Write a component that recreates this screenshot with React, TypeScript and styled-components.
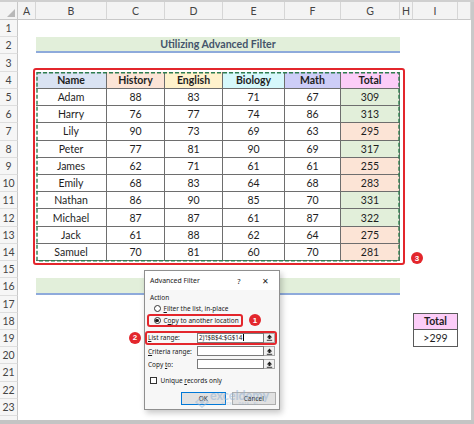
import React from 'react';
import styled, { createGlobalStyle } from 'styled-components';

const GlobalStyle = createGlobalStyle`
  html, body {
    margin: 0;
    padding: 0;
    background: #ffffff;
  }
  body {
    font-family: Lato, "Liberation Sans", sans-serif;
  }
  * {
    box-sizing: border-box;
  }
`;

const colLetters = ['A', 'B', 'C', 'D', 'E', 'F', 'G', 'H', 'I', ''];

const headers = [
  { label: 'Name', bg: '#dae3f3' },
  { label: 'History', bg: '#fce4d6' },
  { label: 'English', bg: '#fff2cc' },
  { label: 'Biology', bg: '#d6f8fb' },
  { label: 'Math', bg: '#cdcdf7' },
  { label: 'Total', bg: '#fccdf8' },
];

const students: [string, number, number, number, number, number][] = [
  ['Adam', 88, 83, 71, 67, 309],
  ['Harry', 76, 77, 74, 86, 313],
  ['Lily', 90, 73, 69, 63, 295],
  ['Peter', 77, 81, 90, 69, 317],
  ['James', 62, 71, 61, 61, 255],
  ['Emily', 68, 83, 64, 68, 283],
  ['Nathan', 86, 90, 85, 70, 331],
  ['Michael', 87, 87, 61, 87, 322],
  ['Jack', 61, 88, 62, 64, 275],
  ['Samuel', 70, 81, 60, 70, 281],
];

// grid column index of sheet column B
const B = 3;

const UploadIcon = () => (
  <svg width="7" height="7" viewBox="0 0 7 7">
    <path d="M3.5 0.6 L6.2 3.6 H4.5 V5 H2.5 V3.6 H0.8 Z" fill="#1f1f1f" />
    <rect x="0.8" y="5.8" width="5.4" height="0.9" fill="#1f1f1f" />
  </svg>
);

const App = () => {
  return (
    <>
      <GlobalStyle />
      <Frame>
        <TopStrip />
        <SheetArea>
          <Sheet>
            <Corner>
              <svg width="8" height="8" viewBox="0 0 8 8">
                <polygon points="8,0 8,8 0,8" fill="#b8b8b8" />
              </svg>
            </Corner>
            {colLetters.map((c, i) => (
              <ColHead key={i} $col={i + 2}>
                {c}
              </ColHead>
            ))}
            {Array.from({ length: 24 }, (_, i) => (
              <RowHead key={i} $row={i + 2}>
                {i < 23 ? i + 1 : ''}
              </RowHead>
            ))}

            <TitleBand $row={3}>Utilizing Advanced Filter</TitleBand>

            {headers.map((h, i) => (
              <Cell key={h.label} $col={B + i} $row={5} $bg={h.bg} $bold>
                {h.label}
              </Cell>
            ))}
            {students.map((s, r) =>
              s.map((v, c) => (
                <Cell
                  key={`${r}-${c}`}
                  $col={B + c}
                  $row={6 + r}
                  $bg={c === 5 ? (Number(v) > 299 ? '#e2efda' : '#fce4d6') : '#ffffff'}
                >
                  {v}
                </Cell>
              ))
            )}
            <CopyMarquee>
              <svg width="364" height="190" viewBox="0 0 364 190">
                <rect
                  x="1"
                  y="0.8"
                  width="362"
                  height="188"
                  fill="none"
                  stroke="#2e7d4f"
                  strokeWidth="1.4"
                  strokeDasharray="4 2"
                />
              </svg>
            </CopyMarquee>
            <RedFrame>
              <Badge $right={-20} $bottom={-1}>3</Badge>
            </RedFrame>

            <TitleBand $row={17} />

            <CriteriaCell $row={19} $bg="#fccdf8" $bold>
              Total
            </CriteriaCell>
            <CriteriaCell $row={20} $bg="#ffffff">
              &gt;299
            </CriteriaCell>
          </Sheet>
          <RightStrip />
        </SheetArea>
        <BottomStrip />

        <Dialog>
          <TitleBar>
            <DialogTitle>Advanced Filter</DialogTitle>
            <HelpMark>?</HelpMark>
            <CloseMark>✕</CloseMark>
          </TitleBar>
          <GroupLabel>Action</GroupLabel>
          <RadioRow>
            <Radio />
            <span>
              <u>F</u>ilter the list, in-place
            </span>
          </RadioRow>
          <RadioHighlight>
            <Radio $checked />
            <span>
              C<u>o</u>py to another location
            </span>
            <Badge $right={-20} $top={-2}>1</Badge>
          </RadioHighlight>
          <FieldHighlight>
            <FieldLabel>
              <u>L</u>ist range:
            </FieldLabel>
            <FieldInput>2)'!$B$4:$G$14<Caret /></FieldInput>
            <PickButton>
              <UploadIcon />
            </PickButton>
            <Badge $left={-18} $top={-1}>2</Badge>
          </FieldHighlight>
          <FieldRow $gap={1}>
            <FieldLabel>
              <u>C</u>riteria range:
            </FieldLabel>
            <FieldInput />
            <PickButton>
              <UploadIcon />
            </PickButton>
          </FieldRow>
          <FieldRow $gap={2}>
            <FieldLabel>
              Copy <u>t</u>o:
            </FieldLabel>
            <FieldInput />
            <PickButton>
              <UploadIcon />
            </PickButton>
          </FieldRow>
          <CheckRow>
            <CheckBox />
            <span>
              Unique <u>r</u>ecords only
            </span>
          </CheckRow>
          <ButtonRow>
            <DialogButton $focused>OK</DialogButton>
            <DialogButton>Cancel</DialogButton>
          </ButtonRow>
        </Dialog>

        <Watermark>
          <WatermarkLogo>
            <svg width="14" height="12" viewBox="0 0 14 12">
              <path d="M1 6 L7 1 L13 6 L7 11 Z" fill="none" stroke="#9bb8d6" strokeWidth="1.6" />
              <path d="M4 6 L7 3.5 L10 6 L7 8.5 Z" fill="#9bb8d6" />
            </svg>
          </WatermarkLogo>
          <WatermarkText>
            <WatermarkName>exceldemy</WatermarkName>
            <WatermarkTag>EXCEL · DATA · BI</WatermarkTag>
          </WatermarkText>
        </Watermark>
      </Frame>
    </>
  );
};

export default App;

const Frame = styled.div`
  position: relative;
  width: 474px;
  height: 424px;
  overflow: hidden;
  background: #ffffff;
  display: flex;
  flex-direction: column;
`;

const TopStrip = styled.div`
  height: 2px;
  background: #cfcfcf;
`;

const SheetArea = styled.div`
  display: flex;
  height: 418px;
`;

const Sheet = styled.div`
  width: 471px;
  height: 418px;
  overflow: hidden;
  display: grid;
  grid-template-columns: 18px 18px 71px 58px 58px 62px 56px 59px 13px 45px 13px;
  grid-template-rows: 18px;
  grid-auto-rows: 17.23px;
  background: #ffffff;
`;

const RightStrip = styled.div`
  width: 3px;
  background: #c9c9c9;
`;

const BottomStrip = styled.div`
  height: 4px;
  background: #c4c4c4;
`;

const Corner = styled.div`
  grid-column: 1;
  grid-row: 1;
  background: #f3f3f3;
  border-right: 1px solid #c8c8c8;
  border-bottom: 1px solid #c8c8c8;
  display: flex;
  align-items: flex-end;
  justify-content: flex-end;
  padding: 0 2px 2px 0;
`;

const ColHead = styled.div<{ $col: number }>`
  grid-column: ${(p) => p.$col};
  grid-row: 1;
  background: #f3f3f3;
  border-right: 1px solid #d6d6d6;
  border-bottom: 1px solid #c8c8c8;
  color: #444444;
  font-size: 10.5px;
  display: flex;
  align-items: center;
  justify-content: center;
`;

const RowHead = styled.div<{ $row: number }>`
  grid-column: 1;
  grid-row: ${(p) => p.$row};
  background: #f6f6f6;
  border-right: 1px solid #c8c8c8;
  border-bottom: 1px solid #dedede;
  color: #444444;
  font-size: 10.5px;
  display: flex;
  align-items: center;
  justify-content: center;
`;

const TitleBand = styled.div<{ $row: number }>`
  grid-column: 3 / 9;
  grid-row: ${(p) => p.$row};
  margin-bottom: 1px;
  background: #e2efda;
  border-bottom: 2px solid #8eaadb;
  color: #44546a;
  font-weight: 700;
  font-size: 10.6px;
  display: flex;
  align-items: center;
  justify-content: center;
`;

const Cell = styled.div<{ $col: number; $row: number; $bg: string; $bold?: boolean }>`
  grid-column: ${(p) => p.$col};
  grid-row: ${(p) => p.$row};
  background: ${(p) => p.$bg};
  border-right: 1px solid #6e6e6e;
  border-bottom: 1px solid #6e6e6e;
  color: #1e1e1e;
  font-size: 10.5px;
  font-weight: ${(p) => (p.$bold ? 700 : 400)};
  display: flex;
  align-items: center;
  justify-content: center;
`;

const CopyMarquee = styled.div`
  grid-column: 3 / 9;
  grid-row: 5 / 16;
  position: relative;
  z-index: 1;
  pointer-events: none;
  svg {
    display: block;
  }
`;

const RedFrame = styled.div`
  grid-column: 3 / 9;
  grid-row: 5 / 16;
  margin: -4px -5px -4px -3px;
  position: relative;
  z-index: 2;
  border: 2px solid #e3262c;
  border-radius: 3px;
  pointer-events: none;
`;

const Badge = styled.span<{ $left?: number; $right?: number; $top?: number; $bottom?: number }>`
  position: absolute;
  ${(p) => (p.$left !== undefined ? `left: ${p.$left}px;` : '')}
  ${(p) => (p.$right !== undefined ? `right: ${p.$right}px;` : '')}
  ${(p) => (p.$top !== undefined ? `top: ${p.$top}px;` : '')}
  ${(p) => (p.$bottom !== undefined ? `bottom: ${p.$bottom}px;` : '')}
  width: 12px;
  height: 12px;
  border-radius: 50%;
  background: #e3262c;
  color: #ffffff;
  font-family: "Liberation Sans", Arial, sans-serif;
  font-size: 8px;
  font-weight: 700;
  display: flex;
  align-items: center;
  justify-content: center;
`;

const CriteriaCell = styled.div<{ $row: number; $bg: string; $bold?: boolean }>`
  grid-column: 10;
  grid-row: ${(p) => p.$row};
  background: ${(p) => p.$bg};
  border: 1px solid #5a5a5a;
  border-top-width: ${(p) => (p.$bold ? '1px' : '0')};
  color: #1e1e1e;
  font-size: 10.5px;
  font-weight: ${(p) => (p.$bold ? 700 : 400)};
  display: flex;
  align-items: center;
  justify-content: center;
`;

/* ---------- Advanced Filter dialog ---------- */

const Dialog = styled.div`
  position: absolute;
  left: 144px;
  top: 270px;
  width: 136px;
  height: 140px;
  z-index: 5;
  background: #f7f7f7;
  border: 1px solid #8f8f8f;
  box-shadow: 2px 3px 6px rgba(0, 0, 0, 0.22);
  font-family: "Noto Sans", "Open Sans", sans-serif;
  font-size: 6.5px;
  color: #1a1a1a;
  white-space: nowrap;
  display: flex;
  flex-direction: column;
`;

const TitleBar = styled.div`
  height: 19px;
  display: flex;
  align-items: center;
  padding: 0 5px;
  background: #ffffff;
`;

const DialogTitle = styled.span`
  flex: 1;
  font-size: 6.9px;
`;

const HelpMark = styled.span`
  width: 14px;
  margin-right: 10px;
  text-align: center;
  font-size: 7.5px;
`;

const CloseMark = styled.span`
  width: 18px;
  text-align: center;
  font-size: 7.5px;
`;

const GroupLabel = styled.div`
  margin: 3px 0 0 5px;
  height: 10px;
  line-height: 10px;
`;

const RadioRow = styled.div`
  height: 11px;
  margin-left: 8.5px;
  display: flex;
  align-items: center;
  gap: 3px;
`;

const RadioHighlight = styled.div`
  position: relative;
  width: 96px;
  height: 13px;
  margin-left: 2px;
  padding-left: 4.5px;
  border: 2px solid #e3262c;
  border-radius: 3px;
  display: flex;
  align-items: center;
  gap: 3px;
`;

const Radio = styled.span<{ $checked?: boolean }>`
  flex: none;
  width: 7px;
  height: 7px;
  border-radius: 50%;
  border: 1px solid #333333;
  background: #ffffff;
  display: flex;
  align-items: center;
  justify-content: center;
  &::after {
    content: '';
    width: 3.5px;
    height: 3.5px;
    border-radius: 50%;
    background: ${(p) => (p.$checked ? '#1a1a1a' : 'transparent')};
  }
`;

const FieldHighlight = styled.div`
  position: relative;
  width: 132px;
  height: 14px;
  margin-top: 3.5px;
  padding-left: 1px;
  border: 2px solid #e3262c;
  border-radius: 3px;
  display: flex;
  align-items: center;
`;

const FieldRow = styled.div<{ $gap: number }>`
  width: 132px;
  height: 11px;
  margin-top: ${(p) => p.$gap}px;
  padding-left: 3px;
  display: flex;
  align-items: center;
`;

const FieldLabel = styled.span`
  flex: none;
  width: 49px;
`;

const FieldInput = styled.span`
  flex: none;
  width: 67px;
  height: 10px;
  background: #ffffff;
  border: 1px solid #7a7a7a;
  padding-left: 1px;
  display: flex;
  align-items: center;
  overflow: hidden;
  font-size: 6.2px;
`;

const Caret = styled.span`
  width: 0.8px;
  height: 7px;
  margin-left: 0.5px;
  background: #000000;
`;

const PickButton = styled.span`
  flex: none;
  width: 11px;
  height: 10px;
  background: #f0f0f0;
  border: 1px solid #a8a8a8;
  border-left: none;
  display: flex;
  align-items: center;
  justify-content: center;
`;

const CheckRow = styled.div`
  height: 11px;
  margin: 5.5px 0 0 4.5px;
  display: flex;
  align-items: center;
  gap: 3.5px;
`;

const CheckBox = styled.span`
  width: 7.5px;
  height: 7.5px;
  border: 1px solid #333333;
  background: #ffffff;
`;

const ButtonRow = styled.div`
  margin-top: 6px;
  padding-right: 3px;
  display: flex;
  justify-content: flex-end;
  gap: 6px;
`;

const DialogButton = styled.span<{ $focused?: boolean }>`
  width: 44.5px;
  height: 13px;
  background: #e1e1e1;
  border: 1px solid ${(p) => (p.$focused ? '#0078d7' : '#adadad')};
  display: flex;
  align-items: center;
  justify-content: center;
`;

/* ---------- watermark ---------- */

const Watermark = styled.div`
  position: absolute;
  left: 195px;
  top: 390px;
  z-index: 6;
  display: flex;
  align-items: flex-start;
  gap: 1px;
  opacity: 0.5;
  pointer-events: none;
`;

const WatermarkLogo = styled.span`
  margin-top: 2px;
`;

const WatermarkText = styled.span`
  display: flex;
  flex-direction: column;
  align-items: center;
`;

const WatermarkName = styled.span`
  font-family: Lato, sans-serif;
  font-weight: 700;
  font-size: 12.5px;
  line-height: 12px;
  color: #8eafd3;
`;

const WatermarkTag = styled.span`
  font-family: Lato, sans-serif;
  font-size: 3.5px;
  letter-spacing: 0.5px;
  color: #8eafd3;
`;
